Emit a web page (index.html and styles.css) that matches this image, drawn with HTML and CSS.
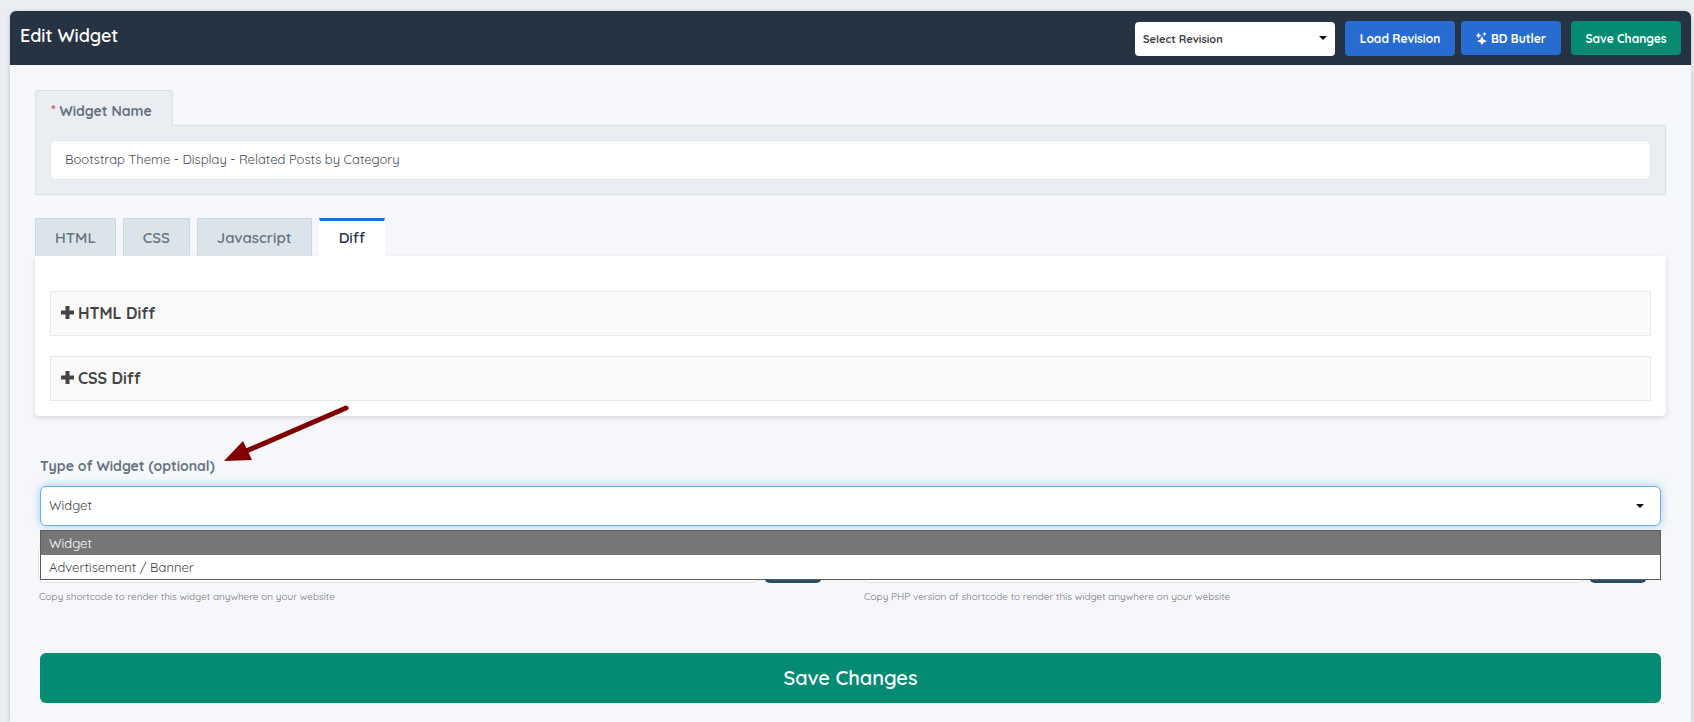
FILE: index.html
```html
<!DOCTYPE html>
<html lang="en">
<head>
  <meta charset="UTF-8" />
  <meta name="viewport" content="width=device-width, initial-scale=1.0"/>
  <title>Edit Widget</title>
  <link rel="stylesheet" href="styles.css">
</head>
<body>

  <form class="widget-editor">
    <header class="editor-header">
      <h1>Edit Widget</h1>
      <div class="header-actions">
        <div class="select-wrap revision-select">
          <select aria-label="Select Revision">
            <option>Select Revision</option>
          </select>
        </div>
        <button type="button" class="btn btn-primary btn-load">Load Revision</button>
        <button type="button" class="btn btn-primary btn-butler">
          <svg class="sparkles" viewBox="0 0 11 13" aria-hidden="true">
            <path d="M6 4L7.500 7.500L11 9L7.500 10.500L6 13L4.500 10.500L1 9L4.500 7.500Z"/>
            <path d="M2.500 .5L3.500 2.500L5.500 3.500L3.500 4.500L2.500 6.500L1.500 4.500L0 3.500L1.500 2.500Z"/>
            <path d="M8.500 0L9.200 1.300L10.500 2L9.200 2.700L8.500 4L7.800 2.700L6.500 2L7.800 1.300Z"/>
          </svg>
          BD Butler
        </button>
        <button type="submit" class="btn btn-success btn-save">Save Changes</button>
      </div>
    </header>

    <main class="editor-body">
      <section class="name-section">
        <label class="name-tab" for="widgetName"><span class="required">*</span> Widget Name</label>
        <div class="name-box">
          <input type="text" id="widgetName" value="Bootstrap Theme - Display - Related Posts by Category" />
        </div>
      </section>

      <section class="code-section">
        <div class="tabs" role="tablist">
          <button type="button" class="tab" role="tab">HTML</button>
          <button type="button" class="tab" role="tab">CSS</button>
          <button type="button" class="tab" role="tab">Javascript</button>
          <button type="button" class="tab active" role="tab" aria-selected="true">Diff</button>
        </div>
        <div class="tab-panel" role="tabpanel">
          <button type="button" class="diff-toggle">
            <svg class="plus" viewBox="0 0 13 13" aria-hidden="true"><path d="M4.500 0h4v4.500H13v4H8.500V13h-4V8.500H0v-4h4.500z"/></svg>
            HTML Diff
          </button>
          <button type="button" class="diff-toggle">
            <svg class="plus" viewBox="0 0 13 13" aria-hidden="true"><path d="M4.500 0h4v4.500H13v4H8.500V13h-4V8.500H0v-4h4.500z"/></svg>
            CSS Diff
          </button>
        </div>
      </section>

      <section class="type-section">
        <label for="widgetType">Type of Widget (optional)</label>
        <svg class="arrow" viewBox="0 0 128 60" aria-hidden="true">
          <path class="arrow-line" d="M124 4L22 48"/>
          <path d="M2 57L21 37L30 56Z"/>
        </svg>
        <div class="select-wrap type-select">
          <select id="widgetType">
            <option>Widget</option>
            <option>Advertisement / Banner</option>
          </select>
          <ul class="options" role="listbox" aria-label="Type of Widget">
            <li class="selected" role="option" aria-selected="true">Widget</li>
            <li role="option">Advertisement / Banner</li>
          </ul>
        </div>
      </section>

      <section class="shortcodes">
        <div class="shortcode">
          <div class="shortcode-row">
            <input type="text" id="shortcode" aria-describedby="shortcodeHelp" readonly />
            <button type="button" class="copy-btn"></button>
          </div>
          <p id="shortcodeHelp">Copy shortcode to render this widget anywhere on your website</p>
        </div>
        <div class="shortcode">
          <div class="shortcode-row">
            <input type="text" id="phpShortcode" aria-describedby="phpHelp" readonly />
            <button type="button" class="copy-btn"></button>
          </div>
          <p id="phpHelp">Copy PHP version of shortcode to render this widget anywhere on your website</p>
        </div>
      </section>

      <button type="submit" class="btn-success save-large">Save Changes</button>
    </main>
  </form>

</body>
</html>
```

FILE: styles.css
```css
* {
  box-sizing: border-box;
}

body {
  margin: 0;
  padding: 11px 3px 0 10px;
  background: #eaedf2;
  color: #444;
  font-family: Quicksand, Lato, sans-serif;
  font-size: 13px;
}

button,
input,
select {
  font-family: inherit;
  margin: 0;
}

button {
  cursor: pointer;
}

.widget-editor {
  min-height: calc(100vh - 11px);
  background: #f6f7fb;
  border-radius: 6px 6px 0 0;
  box-shadow: 0 1px 4px rgba(0, 0, 0, 0.2);
}

/* header */
.editor-header {
  display: flex;
  justify-content: space-between;
  height: 54px;
  padding: 10px 10px 0;
  background: #263343;
  border-radius: 6px 6px 0 0;
}

.editor-header h1 {
  margin: 3px 0 0;
  color: #fff;
  font-size: 18px;
  line-height: 24px;
  font-weight: 600;
}

.header-actions {
  display: flex;
  align-items: flex-start;
}

.select-wrap {
  position: relative;
}

.select-wrap select {
  display: block;
  width: 100%;
  appearance: none;
  background: #fff;
  color: #444;
}

.select-wrap::after {
  content: "";
  position: absolute;
  border: 4px solid transparent;
  border-top-color: #000;
  border-bottom: 0;
  pointer-events: none;
}

.revision-select {
  width: 200px;
  margin: 1px 10px 0 0;
}

.revision-select select {
  height: 34px;
  padding: 0 8px;
  border: none;
  border-radius: 4px;
  font-size: 11px;
  font-weight: bold;
}

.revision-select::after {
  top: 14px;
  right: 8px;
}

.btn {
  height: 34px;
  padding: 0;
  border: none;
  border-radius: 4px;
  color: #fff;
  font-size: 12px;
  font-weight: bold;
}

.btn-primary {
  background: #276dd1;
}

.btn-success {
  background: #048b72;
}

.btn-load {
  width: 110px;
  height: 35px;
  margin-right: 6px;
}

.btn-butler {
  display: flex;
  align-items: center;
  justify-content: center;
  gap: 4px;
  width: 100px;
  margin-right: 10px;
}

.btn-save {
  width: 110px;
}

.sparkles {
  width: 11px;
  height: 13px;
  fill: #fff;
}

.editor-body {
  padding: 25px 25px 19px;
}

/* widget name */
.name-tab {
  display: block;
  position: relative;
  width: 138px;
  height: 36px;
  margin-bottom: -1px;
  padding-left: 15px;
  background: #eaedf2;
  border: 1px solid #d9e1ea;
  border-bottom: none;
  border-radius: 4px 4px 0 0;
  color: #67727f;
  font-size: 14px;
  line-height: 40px;
  font-weight: bold;
}

.required {
  color: #b94a48;
  font-size: 15px;
  font-weight: normal;
}

.name-box {
  padding: 14px;
  background: #eaedf2;
  border: 1px solid #d9e1ea;
}

.name-box input {
  display: block;
  width: 100%;
  height: 40px;
  padding: 0 14px 2px;
  background: #fff;
  border: 1px solid #e3e6ea;
  border-radius: 6px;
  color: #444d57;
  font-size: 13px;
}

/* tabs */
.tabs {
  display: flex;
  gap: 7px;
  margin-top: 23px;
}

.tab {
  height: 38px;
  padding: 0 19px;
  background: #dce4eb;
  border: 1px solid #cbd8e4;
  border-bottom: none;
  color: #67727f;
  font-size: 15px;
  font-weight: 600;
}

.tab.active {
  padding-bottom: 2px;
  background: #fff;
  border-color: #fff;
  border-top: 3px solid #276dd1;
  color: #263343;
}

.tab-panel {
  display: grid;
  gap: 20px;
  padding: 35px 15px 15px;
  background: #fff;
  border-radius: 0 0 4px 4px;
  box-shadow: 0 2px 5px rgba(0, 0, 0, 0.12);
}

.diff-toggle {
  display: flex;
  align-items: center;
  gap: 4px;
  height: 45px;
  padding: 0 10px 2px;
  background: #fafafa;
  border: 1px solid #e9e9e9;
  color: #444;
  font-size: 16px;
  font-weight: bold;
}

.plus {
  width: 13px;
  height: 13px;
  fill: #444;
}

/* widget type */
.type-section {
  position: relative;
  margin-top: 40px;
  padding: 0 5px;
}

.type-section label {
  display: block;
  height: 30px;
  color: #67727f;
  font-size: 14px;
  line-height: 20px;
  font-weight: bold;
}

.arrow {
  position: absolute;
  top: -52px;
  left: 187px;
  width: 128px;
  height: 60px;
  fill: #800000;
}

.arrow-line {
  stroke: #800000;
  stroke-width: 5;
  stroke-linecap: round;
}

.type-select select {
  height: 40px;
  padding: 0 8px 2px;
  border: 1px solid #66afe9;
  border-radius: 6px;
  box-shadow: 0 0 8px rgba(102, 175, 233, 0.6);
  font-size: 13px;
}

.type-select::after {
  top: 18px;
  right: 17px;
}

.options {
  position: absolute;
  top: 44px;
  left: 0;
  right: 0;
  z-index: 1;
  margin: 0;
  padding: 0;
  list-style: none;
  background: #fff;
  border: 1px solid #5c5c5c;
}

.options li {
  padding: 0 8px;
  font-size: 13px;
  line-height: 24px;
}

.options .selected {
  background: #767676;
  color: #fff;
}

/* shortcodes */
.shortcodes {
  display: grid;
  grid-template-columns: 1fr 1fr;
  gap: 41px;
  margin-top: 18px;
  padding: 0 19px 0 3px;
}

.shortcode-row {
  display: flex;
  gap: 5px;
}

.shortcode-row input {
  flex: 1;
  height: 39px;
  background: #fff;
  border: 1px solid #dfe2e6;
  border-radius: 6px;
}

.copy-btn {
  width: 58px;
  height: 39px;
  background: #264b6b;
  border: none;
  border-radius: 6px;
}

.shortcode p {
  margin: 6px 0 0;
  padding-left: 1px;
  color: #777;
  font-size: 10px;
  line-height: 16px;
}

.save-large {
  display: block;
  width: calc(100% - 10px);
  height: 50px;
  margin: 48px 5px 0;
  padding: 0 0 2px;
  border: none;
  border-radius: 6px;
  color: #fff;
  font-size: 20px;
  font-weight: 600;
}
```
